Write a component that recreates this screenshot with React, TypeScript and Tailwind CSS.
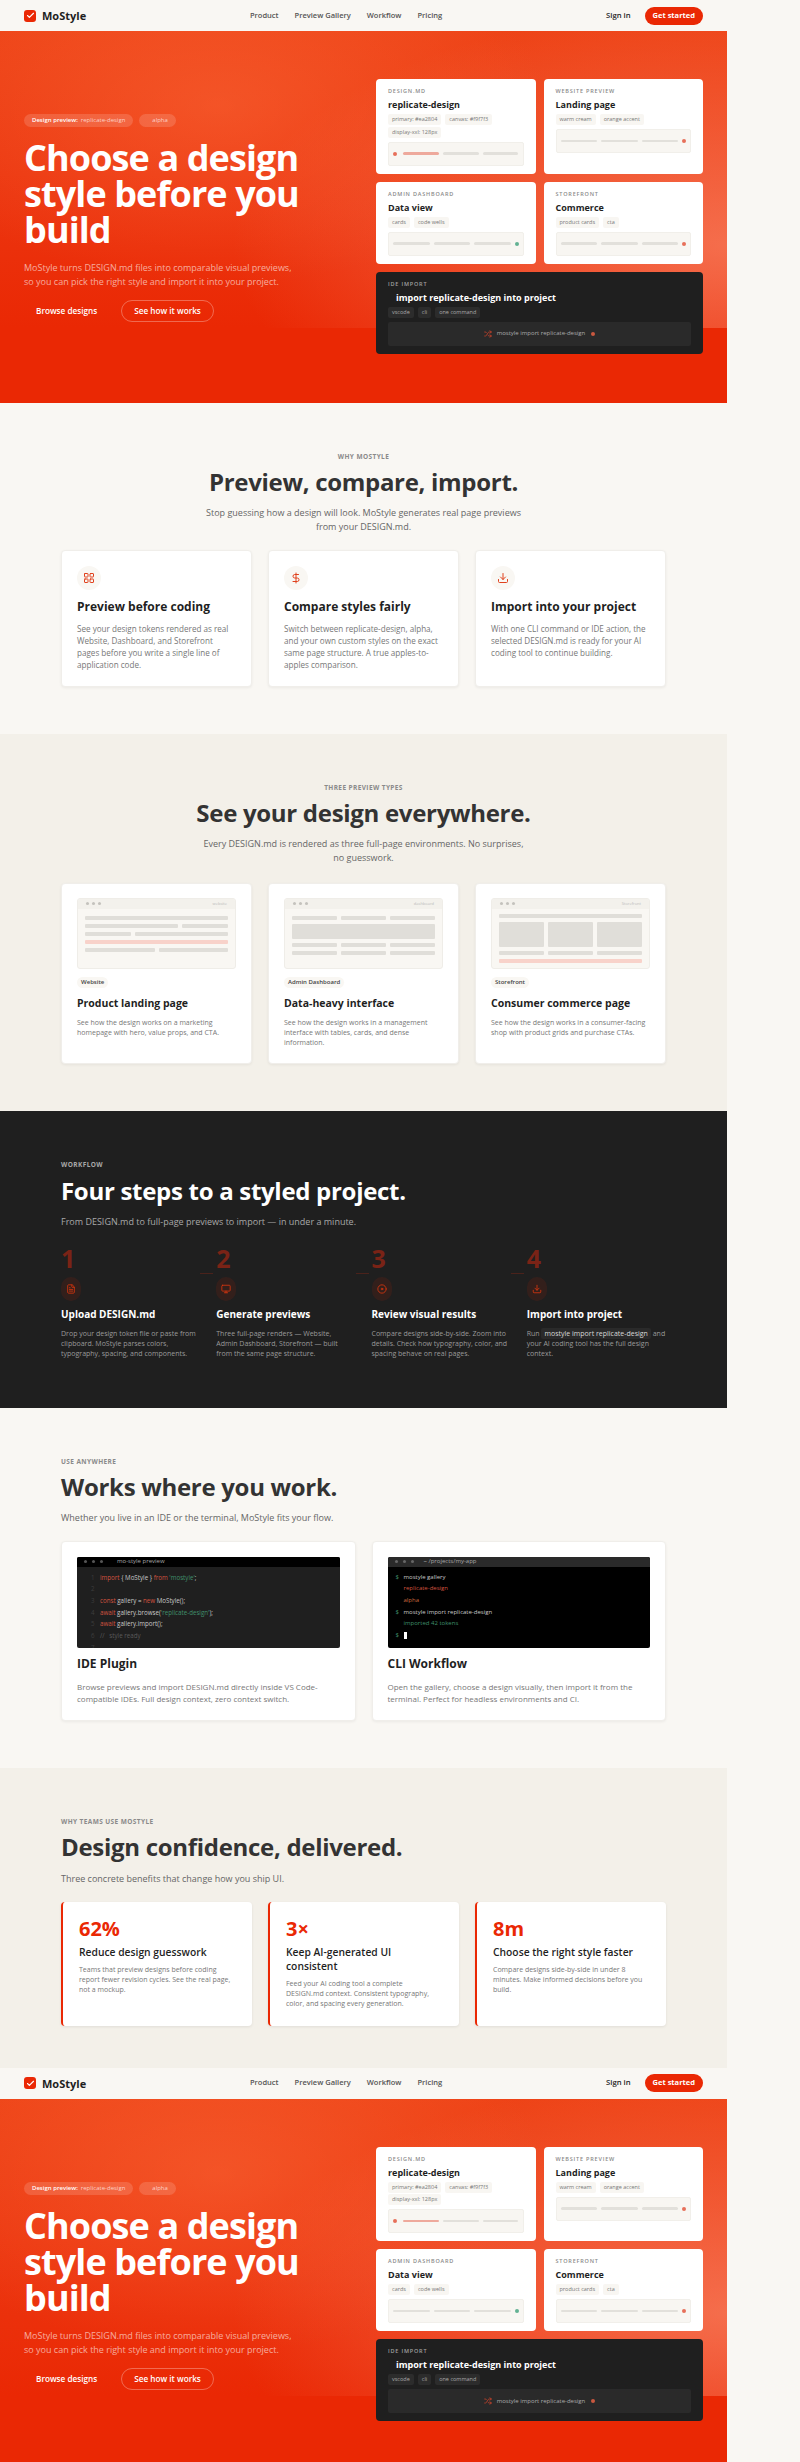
import { LayoutGrid, DollarSign, Download, FileText, Monitor, Disc, Shuffle, Check } from "lucide-react";

const heroCards = [
  { eyebrow: "DESIGN.MD", title: "replicate-design", tags: ["primary: #ea2804", "canvas: #f9f7f3", "display-xxl: 128px"], bars: "lead" },
  { eyebrow: "WEBSITE PREVIEW", title: "Landing page", tags: ["warm cream", "orange accent"], bars: "orange" },
  { eyebrow: "ADMIN DASHBOARD", title: "Data view", tags: ["cards", "code wells"], bars: "green" },
  { eyebrow: "STOREFRONT", title: "Commerce", tags: ["product cards", "cta"], bars: "orange" },
];

const whyCards = [
  { icon: LayoutGrid, title: "Preview before coding", text: "See your design tokens rendered as real Website, Dashboard, and Storefront pages before you write a single line of application code." },
  { icon: DollarSign, title: "Compare styles fairly", text: "Switch between replicate-design, alpha, and your own custom styles on the exact same page structure. A true apples-to-apples comparison." },
  { icon: Download, title: "Import into your project", text: "With one CLI command or IDE action, the selected DESIGN.md is ready for your AI coding tool to continue building." },
];

const steps = [
  { n: "1", icon: FileText, title: "Upload DESIGN.md", text: "Drop your design token file or paste from clipboard. MoStyle parses colors, typography, spacing, and components." },
  { n: "2", icon: Monitor, title: "Generate previews", text: "Three full-page renders — Website, Admin Dashboard, Storefront — built from the same page structure." },
  { n: "3", icon: Disc, title: "Review visual results", text: "Compare designs side-by-side. Zoom into details. Check how typography, color, and spacing behave on real pages." },
];

const benefits = [
  { stat: "62%", title: "Reduce design guesswork", text: "Teams that preview designs before coding report fewer revision cycles. See the real page, not a mockup." },
  { stat: "3×", title: "Keep AI-generated UI consistent", text: "Feed your AI coding tool a complete DESIGN.md context. Consistent typography, color, and spacing every generation." },
  { stat: "8m", title: "Choose the right style faster", text: "Compare designs side-by-side in under 8 minutes. Make informed decisions before you build." },
];

function Nav() {
  return (
    <nav className="h-[31px] px-6 flex items-center justify-between bg-[#f9f7f3]">
      <div className="flex items-center gap-[6px]">
        <span className="w-3 h-3 rounded-[3px] bg-[#ea2804] flex items-center justify-center text-white"><Check size={9} strokeWidth={3} /></span>
        <span className="text-[11px] leading-none font-bold text-[#1f1f1f]">MoStyle</span>
      </div>
      <div className="flex items-center gap-4 text-[7.5px] font-semibold text-[#555]">
        <span>Product</span>
        <span>Preview Gallery</span>
        <span>Workflow</span>
        <span>Pricing</span>
      </div>
      <div className="flex items-center gap-[14px]">
        <span className="text-[7.7px] font-semibold text-[#1f1f1f]">Sign in</span>
        <span className="h-[18px] px-2 rounded-full bg-[#ea2804] flex items-center text-[7.5px] font-bold text-white">Get started</span>
      </div>
    </nav>
  );
}

function Tag({ children, dark }: { children: string; dark?: boolean }) {
  return <span className={`h-[11px] px-1 rounded-[2px] flex items-center text-[5.5px] ${dark ? "bg-[#2c2c2c] text-[#aaa]" : "bg-[#f8f6f2] text-[#777]"}`}>{children}</span>;
}

function MiniBars({ kind }: { kind: string }) {
  const bar = "flex-1 h-[2.5px] rounded-full bg-[#e2e0db]";
  return (
    <div className="h-[24px] px-1 flex items-center gap-1 rounded-[2px] border border-[#f1efea] bg-[#f8f6f2]">
      {kind === "lead" && <span className="w-1 h-1 rounded-full bg-[#e76f5a] mr-[2px] shrink-0" />}
      <span className={kind === "lead" ? "flex-1 h-[2.5px] rounded-full bg-[#eea99c]" : bar} />
      <span className={bar} />
      <span className={bar} />
      {kind !== "lead" && <span className={`w-1 h-1 rounded-full shrink-0 ${kind === "green" ? "bg-[#62b193]" : "bg-[#e76f5a]"}`} />}
    </div>
  );
}

function Hero() {
  return (
    <section className="relative bg-[#ea2804] px-6 pt-12 pb-[49px] grid grid-cols-[1fr_327px] gap-8 items-center">
      <div className="absolute inset-x-0 top-0 h-[297px] bg-[radial-gradient(ellipse_45%_60%_at_30%_25%,rgba(255,120,70,0.38)_0%,rgba(255,100,50,0)_100%),radial-gradient(ellipse_68%_80%_at_100%_72%,rgba(255,170,140,0.5)_0%,rgba(255,150,120,0)_100%),linear-gradient(180deg,rgba(240,85,35,0.6)_0%,rgba(238,70,30,0.4)_60%,rgba(234,40,4,0)_100%)]" />
      <div className="relative pt-1">
        <div className="flex items-center gap-[6px]">
          <span className="h-[13px] px-2 rounded-full bg-white/15 flex items-center text-[6px] text-white/70"><b className="font-semibold text-white mr-[3px]">Design preview:</b>replicate-design</span>
          <span className="h-[13px] pl-[13px] pr-2 rounded-full bg-white/15 flex items-center text-[6px] text-white/70">alpha</span>
        </div>
        <h1 className="mt-[13px] text-[36px] leading-[36px] font-bold tracking-[-0.9px] text-white">Choose a design style before you build</h1>
        <p className="mt-[13px] max-w-[275px] text-[9px] leading-[14px] text-white/60">MoStyle turns DESIGN.md files into comparable visual previews, so you can pick the right style and import it into your project.</p>
        <div className="mt-[11px] flex items-center gap-3">
          <span className="h-[22px] px-3 rounded-full flex items-center text-[8.2px] font-semibold text-white">Browse designs</span>
          <span className="h-[22px] px-3 rounded-full border border-white/30 flex items-center text-[8.2px] font-semibold text-white">See how it works</span>
        </div>
      </div>
      <div className="relative grid grid-cols-2 gap-2">
        {heroCards.map((c) => (
          <div key={c.title} className="bg-white rounded-[4px] px-3 py-2">
            <p className="text-[5.5px] leading-[8px] font-semibold tracking-[0.8px] text-[#8a8a8a]">{c.eyebrow}</p>
            <p className="mt-[3px] text-[9px] leading-[14px] font-bold text-[#1f1f1f]">{c.title}</p>
            <div className="mt-[2px] mb-1 flex flex-wrap gap-x-1 gap-y-[1.5px]">
              {c.tags.map((t) => <Tag key={t}>{t}</Tag>)}
            </div>
            <MiniBars kind={c.bars} />
          </div>
        ))}
        <div className="col-span-2 bg-[#1f1f1f] rounded-[4px] px-3 py-2">
          <p className="text-[5.5px] leading-[8px] font-semibold tracking-[0.8px] text-[#a0a0a0]">IDE IMPORT</p>
          <p className="mt-[3px] pl-2 text-[9px] leading-[14px] font-bold text-white">import replicate-design into project</p>
          <div className="mt-[2px] mb-1 flex gap-1">
            <Tag dark>vscode</Tag>
            <Tag dark>cli</Tag>
            <Tag dark>one command</Tag>
          </div>
          <div className="h-[24px] flex items-center justify-center gap-1 rounded-[2px] bg-[#2a2a2a] text-[6px] text-[#aaa]">
            <Shuffle size={8} className="text-[#e5482c] mr-[1px]" />
            <span>mostyle import replicate-design</span>
            <span className="ml-[2px] w-1 h-1 rounded-full bg-[#c9583f]" />
          </div>
        </div>
      </div>
    </section>
  );
}

function PreviewWindow({ label, top, children }: { label: string; top: string; children: any }) {
  return (
    <div className="h-[71px] rounded-[3px] border border-[#efede8] bg-[#f9f7f3] overflow-hidden">
      <div className="h-[10px] px-2 flex items-center gap-[3px] bg-[#f3f1ec]">
        <span className="w-[3px] h-[3px] rounded-full bg-[#c4c2bd]" />
        <span className="w-[3px] h-[3px] rounded-full bg-[#c4c2bd]" />
        <span className="w-[3px] h-[3px] rounded-full bg-[#c4c2bd]" />
        <span className="ml-auto text-[4px] text-[#bbb]">{label}</span>
      </div>
      <div className={`px-[7px] ${top} flex flex-col gap-1`}>{children}</div>
    </div>
  );
}

const ROW = "h-[4px] rounded-[1px] bg-[#e0ded9]";

function WebsiteMock() {
  return (
    <PreviewWindow label="website" top="pt-[7px]">
      <div className={ROW} />
      <div className="flex gap-1"><div className={`${ROW} flex-[2]`} /><div className={`${ROW} flex-1`} /></div>
      <div className="flex gap-1"><div className={`${ROW} flex-1`} /><div className={`${ROW} flex-[2]`} /></div>
      <div className="h-[4px] rounded-[1px] bg-[#f8d2ca]" />
      <div className="flex gap-1"><div className={`${ROW} flex-1`} /><div className={`${ROW} flex-1`} /></div>
    </PreviewWindow>
  );
}

function DashboardMock() {
  const three = <div className="flex gap-1"><div className={`${ROW} flex-1`} /><div className={`${ROW} flex-1`} /><div className={`${ROW} flex-1`} /></div>;
  return (
    <PreviewWindow label="dashboard" top="pt-[7px]">
      {three}
      <div className="h-[15px] rounded-[1px] bg-[#e0ded9]" />
      {three}
      {three}
    </PreviewWindow>
  );
}

function StoreMock() {
  return (
    <PreviewWindow label="Storefront" top="pt-[5px]">
      <div className={ROW} />
      <div className="flex gap-1">
        <div className="flex-1 h-[25px] rounded-[1px] bg-[#e0ded9]" />
        <div className="flex-1 h-[25px] rounded-[1px] bg-[#e0ded9]" />
        <div className="flex-1 h-[25px] rounded-[1px] bg-[#e0ded9]" />
      </div>
      <div className="flex gap-1"><div className={`${ROW} flex-1`} /><div className={`${ROW} flex-1`} /><div className={`${ROW} flex-1`} /></div>
      <div className="h-[4px] rounded-[1px] bg-[#f8d2ca]" />
    </PreviewWindow>
  );
}

const previewCards = [
  { mock: <WebsiteMock />, badge: "Website", title: "Product landing page", text: "See how the design works on a marketing homepage with hero, value props, and CTA." },
  { mock: <DashboardMock />, badge: "Admin Dashboard", title: "Data-heavy interface", text: "See how the design works in a management interface with tables, cards, and dense information." },
  { mock: <StoreMock />, badge: "Storefront", title: "Consumer commerce page", text: "See how the design works in a consumer-facing shop with product grids and purchase CTAs." },
];

function Eyebrow({ children, className = "" }: { children: string; className?: string }) {
  return <p className={`text-[6.5px] leading-[12px] font-bold tracking-[0.4px] ${className}`}>{children}</p>;
}

const CARD = "bg-white rounded-[4px] border border-[#f0eeea] shadow-[0_1px_3px_rgba(0,0,0,0.06)]";
const H2 = "mt-[1px] text-[24px] leading-[36px] font-bold tracking-[-0.3px]";
const SUB = "mt-[6px] text-[9px] leading-[14px]";

function CodeLine({ n, children }: { n: string; children?: any }) {
  return (
    <div className="h-[11.7px] flex items-center">
      <span className="w-[23px] pl-[14px] text-[#3d3d3d] shrink-0">{n}</span>
      <span className="whitespace-pre text-[#c9c9c9]">{children}</span>
    </div>
  );
}

function UseAnywhere() {
  return (
    <div className="mt-4 grid grid-cols-2 gap-4">
      <div className={`${CARD} h-[180px] p-[15px]`}>
        <div className="h-[91px] rounded-[2px] overflow-hidden bg-[#1f1f1f] text-[6.2px] leading-[11.7px]">
          <div className="h-[10px] px-[7px] flex items-center gap-[5px] bg-black">
            <span className="w-[3px] h-[3px] rounded-full bg-[#555]" />
            <span className="w-[3px] h-[3px] rounded-full bg-[#555]" />
            <span className="w-[3px] h-[3px] rounded-full bg-[#555]" />
            <span className="ml-[9px] text-[6px] text-[#a8a8a8]">mo-style preview</span>
          </div>
          <div className="pt-[5px]">
            <CodeLine n="1"><span className="text-[#d3533f]">import</span> {"{ MoStyle }"} <span className="text-[#d3533f]">from</span> <span className="text-[#3f8f6b]">'mostyle'</span>;</CodeLine>
            <CodeLine n="2" />
            <CodeLine n="3"><span className="text-[#d3533f]">const</span> gallery = <span className="text-[#d3533f]">new</span> MoStyle();</CodeLine>
            <CodeLine n="4"><span className="text-[#d3533f]">await</span> gallery.browse(<span className="text-[#3f8f6b]">'replicate-design'</span>);</CodeLine>
            <CodeLine n="5"><span className="text-[#d3533f]">await</span> gallery.import();</CodeLine>
            <CodeLine n="6"><span className="text-[#5a5a5a]">//   style ready</span></CodeLine>
            <CodeLine n="7" />
          </div>
        </div>
        <p className="mt-[6px] text-[12px] leading-[20px] font-bold text-[#1f1f1f]">IDE Plugin</p>
        <p className="mt-[7px] text-[8px] leading-[12px] text-[#777]">Browse previews and import DESIGN.md directly inside VS Code-compatible IDEs. Full design context, zero context switch.</p>
      </div>
      <div className={`${CARD} h-[180px] p-[15px]`}>
        <div className="h-[91px] rounded-[2px] overflow-hidden bg-black text-[6px] leading-[11.7px] text-[#c9c9c9]">
          <div className="h-[10px] px-[7px] flex items-center gap-[5px] bg-[#2a2a2a]">
            <span className="w-[3px] h-[3px] rounded-full bg-[#666]" />
            <span className="w-[3px] h-[3px] rounded-full bg-[#666]" />
            <span className="w-[3px] h-[3px] rounded-full bg-[#666]" />
            <span className="ml-[5px] text-[#a8a8a8]">~ /projects/my-app</span>
          </div>
          <div className="pt-[5px] pl-2">
            <div><span className="inline-block w-2 text-[#3f8f6b]">$</span>mostyle gallery</div>
            <div className="pl-2 text-[#d3533f]">replicate-design</div>
            <div className="pl-2 text-[#c9683f]">alpha</div>
            <div><span className="inline-block w-2 text-[#3f8f6b]">$</span>mostyle import replicate-design</div>
            <div className="pl-2 text-[#3f8f6b]">imported 42 tokens</div>
            <div className="flex items-center"><span className="inline-block w-2 text-[#3f8f6b]">$</span><span className="w-[3px] h-[7px] bg-white" /></div>
          </div>
        </div>
        <p className="mt-[6px] text-[12px] leading-[20px] font-bold text-[#1f1f1f]">CLI Workflow</p>
        <p className="mt-[7px] text-[8px] leading-[12px] text-[#777]">Open the gallery, choose a design visually, then import it from the terminal. Perfect for headless environments and CI.</p>
      </div>
    </div>
  );
}

function StepHead({ n, Icon, first }: { n: string; Icon: any; first?: boolean }) {
  return (
    <div className="relative">
      <p className="text-[25px] leading-[32px] font-bold text-[#7a2316]">{n}</p>
      {!first && <span className="absolute left-[-16px] top-[31px] w-[13px] h-px bg-[#4a221b]" />}
      <span className="mt-[3px] w-5 h-6 flex items-center justify-center rounded-full bg-[#ea2804]/10 text-[#d9360f]"><Icon size={10} /></span>
    </div>
  );
}

export default function App() {
  return (
    <div className="h-[2462px] overflow-hidden bg-[#f9f7f3] font-['Open_Sans',sans-serif]">
      <div className="w-[727px]">
        <Nav />
        <Hero />

        <section className="bg-[#f9f7f3] px-[61px] pt-12 pb-[47px]">
          <Eyebrow className="text-center text-[#8a8a8a]">WHY MOSTYLE</Eyebrow>
          <h2 className={`${H2} text-[#333] text-center`}>Preview, compare, import.</h2>
          <p className={`${SUB} mx-auto max-w-[328px] text-[#666] text-center`}>Stop guessing how a design will look. MoStyle generates real page previews from your DESIGN.md.</p>
          <div className="mt-4 grid grid-cols-3 gap-4">
            {whyCards.map((c) => (
              <div key={c.title} className={`${CARD} h-[137px] p-[15px]`}>
                <span className="w-6 h-6 flex items-center justify-center rounded-full bg-[#f9f7f3] text-[#e0401c]"><c.icon size={12} /></span>
                <p className="mt-2 text-[12px] leading-[18px] font-bold text-[#1f1f1f]">{c.title}</p>
                <p className="mt-[7px] text-[8.1px] leading-[12px] text-[#777]">{c.text}</p>
              </div>
            ))}
          </div>
        </section>

        <section className="bg-[#f3f0e9] px-[61px] pt-12 pb-[47px]">
          <Eyebrow className="text-center text-[#8a8a8a]">THREE PREVIEW TYPES</Eyebrow>
          <h2 className={`${H2} text-[#333] text-center`}>See your design everywhere.</h2>
          <p className={`${SUB} mx-auto max-w-[328px] text-[#666] text-center`}>Every DESIGN.md is rendered as three full-page environments. No surprises, no guesswork.</p>
          <div className="mt-[18px] grid grid-cols-3 gap-4">
            {previewCards.map((c) => (
              <div key={c.title} className={`${CARD} h-[181px] px-[15px] pt-[14px]`}>
                {c.mock}
                <span className="mt-2 block w-fit h-[11px] px-1 rounded-full bg-[#f9f7f3] text-[6px] leading-[11px] font-semibold text-[#444]">{c.badge}</span>
                <p className="mt-[7px] text-[10.5px] leading-[16px] font-bold text-[#1f1f1f]">{c.title}</p>
                <p className="mt-[7px] text-[7px] leading-[10px] text-[#777]">{c.text}</p>
              </div>
            ))}
          </div>
        </section>

        <section className="bg-[#1f1f1f] px-[61px] pt-12 h-[297px]">
          <Eyebrow className="text-[#a8a8a8]">WORKFLOW</Eyebrow>
          <h2 className="mt-[2px] text-[24px] leading-[36px] font-bold tracking-[-0.3px] text-white">Four steps to a styled project.</h2>
          <p className={`${SUB} text-[#a8a8a8]`}>From DESIGN.md to full-page previews to import — in under a minute.</p>
          <div className="mt-[13px] grid grid-cols-4 gap-4">
            {steps.map((s, i) => (
              <div key={s.n}>
                <StepHead n={s.n} Icon={s.icon} first={i === 0} />
                <p className="mt-[5px] text-[10px] leading-[16px] font-bold text-white">{s.title}</p>
                <p className="mt-[7px] max-w-[137px] text-[7px] leading-[10px] text-[#9a9a9a]">{s.text}</p>
              </div>
            ))}
            <div>
              <StepHead n="4" Icon={Download} />
              <p className="mt-[5px] text-[10px] leading-[16px] font-bold text-white">Import into project</p>
              <p className="mt-[7px] text-[7px] leading-[10px] text-[#9a9a9a]">Run <span className="px-[3px] py-[1px] rounded-[2px] bg-[#2a2a2a] text-[#d8d8d8]">mostyle import replicate-design</span> and your AI coding tool has the full design context.</p>
            </div>
          </div>
        </section>

        <section className="bg-[#f9f7f3] px-[61px] pt-12 pb-[47px]">
          <Eyebrow className="text-[#8a8a8a]">USE ANYWHERE</Eyebrow>
          <h2 className={`${H2} text-[#333]`}>Works where you work.</h2>
          <p className={`${SUB} text-[#666]`}>Whether you live in an IDE or the terminal, MoStyle fits your flow.</p>
          <UseAnywhere />
        </section>

        <section className="bg-[#f3f0e9] px-[61px] pt-12 pb-[42px]">
          <Eyebrow className="text-[#8a8a8a]">WHY TEAMS USE MOSTYLE</Eyebrow>
          <h2 className={`${H2} text-[#333]`}>Design confidence, delivered.</h2>
          <p className="mt-[7px] text-[9px] leading-[14px] text-[#666]">Three concrete benefits that change how you ship UI.</p>
          <div className="mt-4 grid grid-cols-3 gap-4">
            {benefits.map((b) => (
              <div key={b.stat} className="h-[124px] bg-white rounded-[4px] border-l-2 border-[#ea2804] shadow-[0_1px_3px_rgba(0,0,0,0.08)] pl-4 pr-[18px] pt-[15px]">
                <p className="text-[20px] leading-[24px] font-bold text-[#ea2804]">{b.stat}</p>
                <p className="mt-1 text-[10.3px] leading-[14px] font-semibold text-[#1f1f1f]">{b.title}</p>
                <p className="mt-[6px] text-[7px] leading-[10px] text-[#777]">{b.text}</p>
              </div>
            ))}
          </div>
        </section>

        <Nav />
        <Hero />
      </div>
    </div>
  );
}
